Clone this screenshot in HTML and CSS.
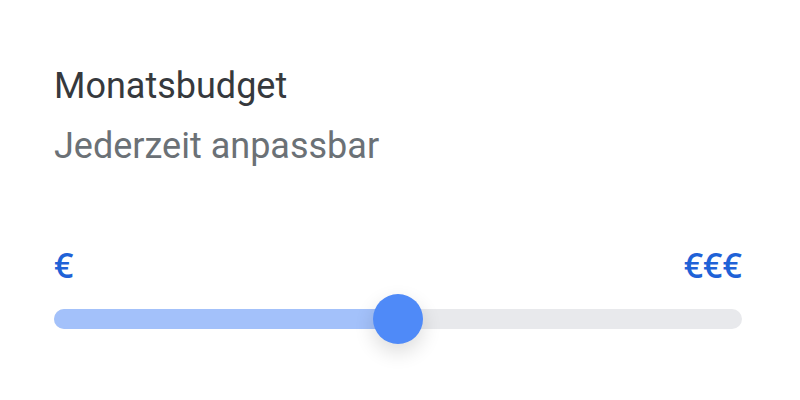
FILE: index.html
```html
<!DOCTYPE html>
<html lang="de">
<head>
    <meta charset="UTF-8">
    <meta name="viewport" content="width=device-width, initial-scale=1.0">
    <title>Monatsbudget</title>
    <link rel="stylesheet" href="styles.css">
</head>
<body>
    <div class="budget-card">
        <h1 class="budget-title">Monatsbudget</h1>
        <p class="budget-subtitle">Jederzeit anpassbar</p>

        <div class="range-labels">
            <span>€</span>
            <span>€€€</span>
        </div>
        <div class="slider">
            <div class="slider-track">
                <div class="slider-fill" style="width: 50%"></div>
            </div>
            <div class="slider-thumb" style="left: 50%"></div>
        </div>
    </div>
</body>
</html>
```

FILE: styles.css
```css
/* Budget slider */
body {
    font-family: Roboto, Arial, sans-serif;
    margin: 0;
    padding: 0;
    min-height: 100vh;
    background-color: #fff;
    color: #35383c;
}

.budget-card {
    padding: 62px 58px 60px 54px;
}

.budget-title {
    font-size: 36px;
    font-weight: 400;
    line-height: 48px;
    margin: 0;
    color: #36393d;
}

.budget-subtitle {
    font-size: 36px;
    line-height: 48px;
    margin: 12px 0 0;
    color: #6b7176;
}

.range-labels {
    display: flex;
    justify-content: space-between;
    margin-top: 75px;
    font-family: "Open Sans", sans-serif;
    font-weight: 600;
    font-size: 34px;
    line-height: 40px;
    color: #1f62d7;
}

.slider {
    position: relative;
    margin-top: 24px;
    height: 20px;
}

.slider-track {
    height: 20px;
    border-radius: 10px;
    background: #e8e9ec;
    overflow: hidden;
}

.slider-fill {
    height: 100%;
    background: #a3c1fa;
}

.slider-thumb {
    position: absolute;
    top: 50%;
    width: 50px;
    height: 50px;
    border-radius: 50%;
    background: #4f8af8;
    transform: translate(-50%, -50%);
    box-shadow: 0 8px 20px rgba(0, 0, 0, 0.14);
}
```
